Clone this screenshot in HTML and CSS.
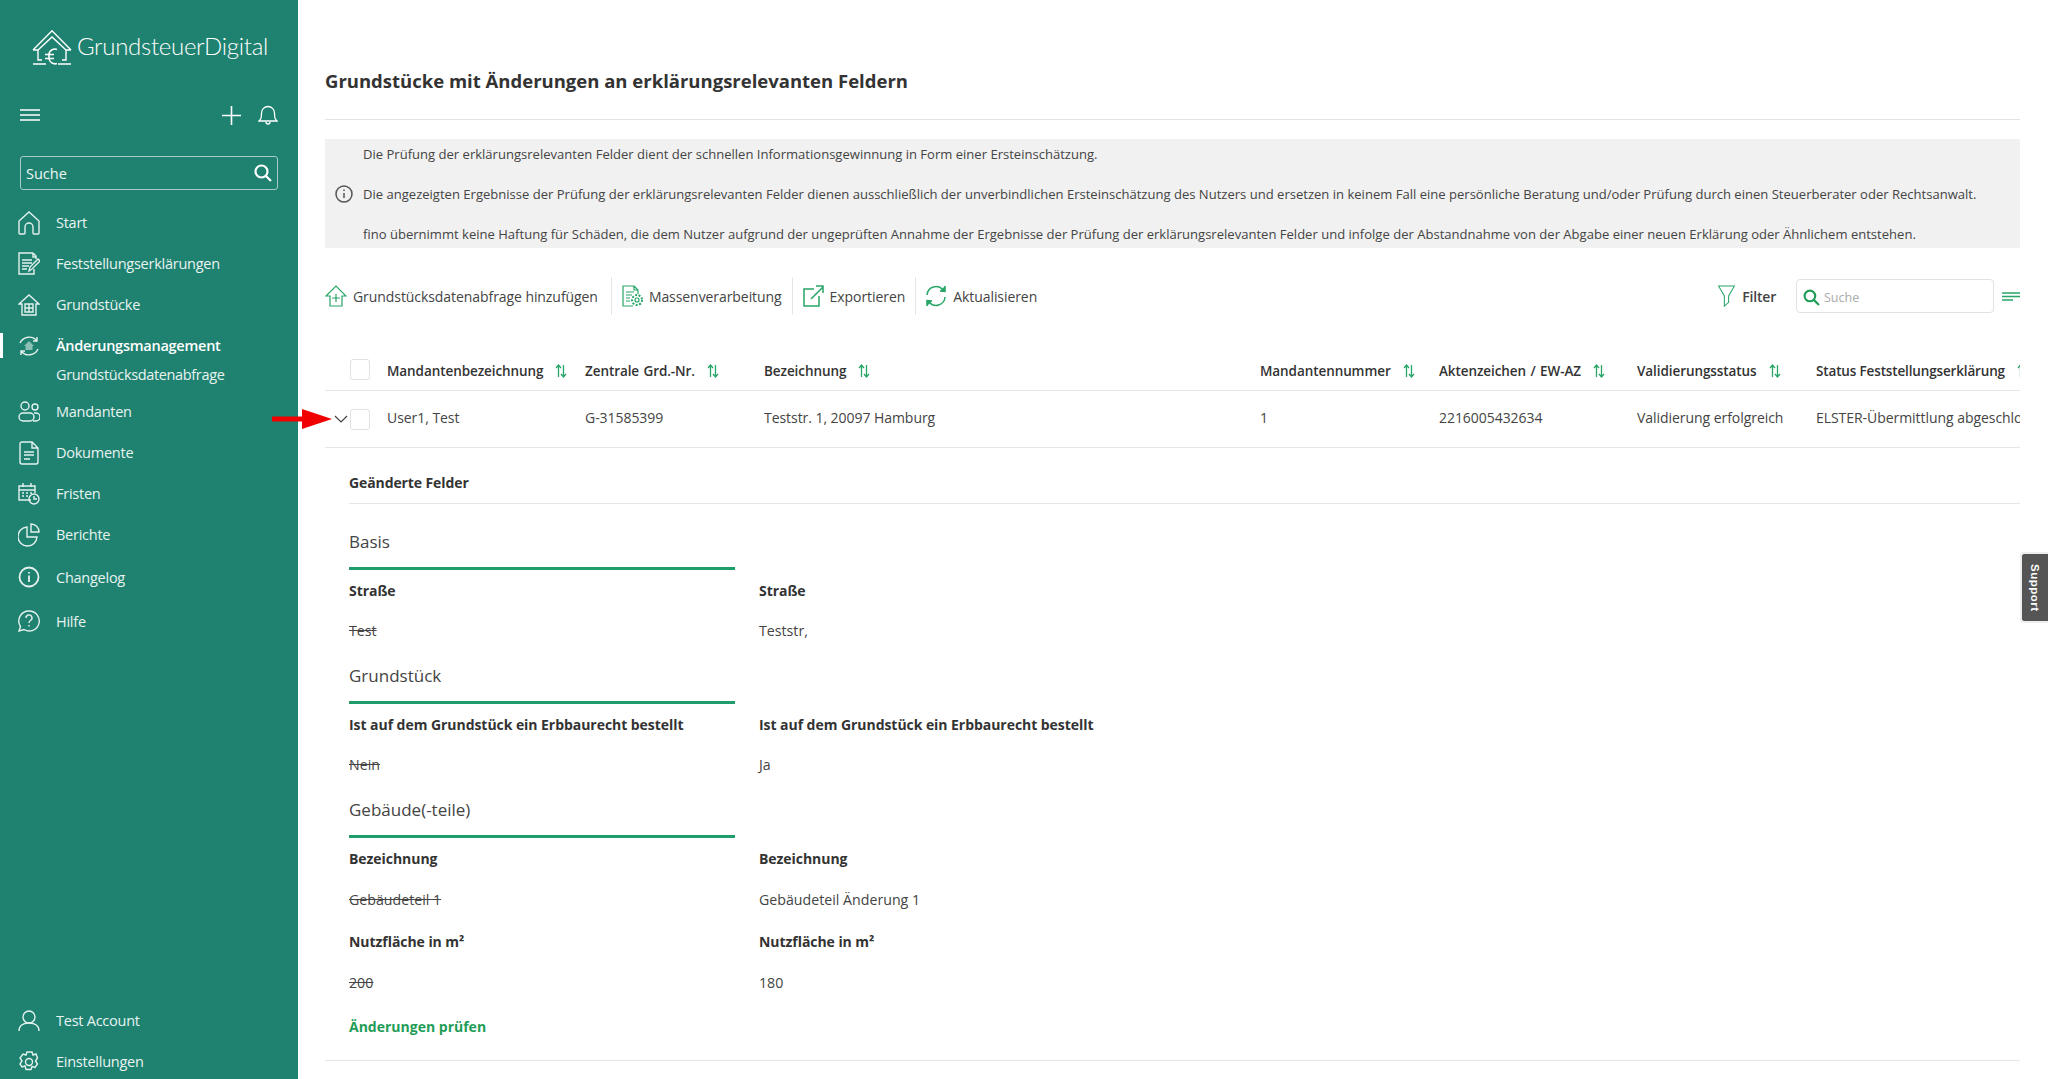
FILE: index.html
```html
<!DOCTYPE html>
<html lang="de">
<head>
<meta charset="utf-8">
<title>Grundstücke mit Änderungen</title>
<link rel="stylesheet" href="styles.css">
</head>
<body>
<svg class="sprite" width="0" height="0">
  <symbol id="sort" viewBox="0 0 12 14"><path d="M3.500 13V1.500M1 4l2.500-3L6 4M8.500 1v11.500M6 10l2.500 3 2.500-3" fill="none" stroke="#27a567" stroke-width="1.300"/></symbol>
</svg>
<div class="app">
  <aside class="sidebar">
    <div class="logo">
      <svg class="logo-icon" viewBox="0 0 40 36" fill="none" stroke="#fff" stroke-width="1.400"><path d="M1 20 20 .8 39 20M1 20h5M39 20h-5M6 20 20 7l14 13M6 20v10h4M34 20v10h-4M1 34h13M26 34h13"/><path d="M25 19.500a6 6 0 0 0-8 4v5a6 6 0 0 0 8 5M13 24.500h9M13 28.500h9" stroke-width="1.600"/></svg>
      <span class="logo-text">GrundsteuerDigital</span>
    </div>
    <div class="side-tools">
      <svg class="ic-burger" viewBox="0 0 20 12" stroke="#fff" stroke-width="1.500"><path d="M0 1h20M0 6h20M0 11h20"/></svg>
      <span class="side-tools-right">
        <svg class="ic-plus" viewBox="0 0 19 19" stroke="#fff" stroke-width="1.600"><path d="M9.500 0v19M0 9.500h19"/></svg>
        <svg class="ic-bell" viewBox="0 0 20 20" fill="none" stroke="#fff" stroke-width="1.300"><path d="M1 16c2-2 2.500-3 2.500-8a6.500 6.500 0 0 1 13 0c0 5 .5 6 2.500 8zM8 17a2 2 0 0 0 4 0M10 1v.5"/></svg>
      </span>
    </div>
    <div class="side-search">
      <span>Suche</span>
      <svg class="ic-side-search" viewBox="0 0 18 18" fill="none" stroke="#fff" stroke-width="2.200"><circle cx="7.500" cy="7.500" r="6"/><path d="m12 12 5 5"/></svg>
    </div>
    <nav class="nav">
      <a class="nav-item"><svg class="nav-ic" viewBox="0 0 22 24"><path d="M1 22V10l10-9 10 9v12a1 1 0 0 1-1 1h-4a1 1 0 0 1-1-1v-6a3 3 0 0 0-8 0v6a1 1 0 0 1-1 1H2a1 1 0 0 1-1-1z"/></svg>Start</a>
      <a class="nav-item"><svg class="nav-ic" viewBox="0 0 22 24"><path d="M15 1H1v21h15v-5M15 1l3 3v3M15 1v4h3M4 8h10M4 11h10M4 14h7M4 17h5M11 19l1-4 8-8 2 2-8 8z"/></svg>Feststellungserklärungen</a>
      <a class="nav-item"><svg class="nav-ic" viewBox="0 0 22 24"><path d="M1 11 11 2l10 9h-3v11H4V11zM7 11h8v8H7zM11 11v8M7 15h8"/></svg>Grundstücke</a>
      <a class="nav-item nav-active"><svg class="nav-ic" viewBox="0 0 22 24"><path d="M2 9a10 10 0 0 1 17-2M20 15a10 10 0 0 1-17 2M19 3v4h-4M3 21v-4h4"/><path class="nav-fill" d="m11 7 5 5h-1.500v4h-7v-4H6z"/></svg>Änderungsmanagement</a>
      <a class="nav-sub">Grundstücksdatenabfrage</a>
      <a class="nav-item nav-after-sub"><svg class="nav-ic" viewBox="0 0 22 24"><circle cx="7" cy="6" r="4"/><circle cx="17" cy="7" r="3"/><rect x="1" y="13" width="15" height="8" rx="4"/><path d="M16 13h2a3.500 3.500 0 0 1 0 8h-3"/></svg>Mandanten</a>
      <a class="nav-item"><svg class="nav-ic" viewBox="0 0 22 24"><path d="M2 3a2 2 0 0 1 2-2h10l6 6v14a2 2 0 0 1-2 2H4a2 2 0 0 1-2-2zM14 1v6h6M6 11h10M6 14h10M6 18h6"/></svg>Dokumente</a>
      <a class="nav-item"><svg class="nav-ic" viewBox="0 0 22 24"><path d="M13 18H1V4h16v7M1 8h16M5 1v4M13 1v4M4 11h2M8 11h2M12 11h2M4 14h2M8 14h2"/><circle cx="16" cy="17" r="5"/><path d="M16 14v3h3"/></svg>Fristen</a>
      <a class="nav-item"><svg class="nav-ic" viewBox="0 0 22 24"><path d="M9 4a9.500 9.500 0 1 0 10 10H9z"/><path d="M13 1a8 8 0 0 1 8 8h-8z"/></svg>Berichte</a>
      <a class="nav-item nav-wide"><svg class="nav-ic nav-ic-strong" viewBox="0 0 22 24"><circle cx="11" cy="12" r="9.500"/><path d="M11 10.500V17M11 7v1.500"/></svg>Changelog</a>
      <a class="nav-item nav-wide"><svg class="nav-ic" viewBox="0 0 22 24"><path d="M11 2a10 10 0 1 1-5 18.500L1 22l1.500-4.500A10 10 0 0 1 11 2z"/><path d="M8 9a3 3 0 1 1 4.500 2.500c-1 .6-1.500 1-1.500 2.500M11 16v1.500"/></svg>Hilfe</a>
    </nav>
    <div class="nav nav-bottom">
      <a class="nav-item"><svg class="nav-ic" viewBox="0 0 22 24"><circle cx="11" cy="8" r="6"/><path d="M1 22c0-5 4-8 10-8s10 3 10 8"/></svg>Test Account</a>
      <a class="nav-item"><svg class="nav-ic" viewBox="0 0 22 24"><circle cx="11" cy="12" r="3.500"/><path d="m9 2-1 3-3-1-3 4 2 3-2 3 2 3 3-1 1 3.500h5l1-3 3 1 2.500-3.500-2-3 2-3L18 4l-3 1-1-3z"/></svg>Einstellungen</a>
    </div>
  </aside>

  <main class="main">
    <h1 class="title">Grundstücke mit Änderungen an erklärungsrelevanten Feldern</h1>
    <section class="notice">
      <svg class="notice-ic" viewBox="0 0 18 18" fill="none" stroke="#555" stroke-width="1.500"><circle cx="9" cy="9" r="8"/><path d="M9 8v5M9 4.500V6"/></svg>
      <div class="notice-text">
        <p>Die Prüfung der erklärungsrelevanten Felder dient der schnellen Informationsgewinnung in Form einer Ersteinschätzung.</p>
        <p>Die angezeigten Ergebnisse der Prüfung der erklärungsrelevanten Felder dienen ausschließlich der unverbindlichen Ersteinschätzung des Nutzers und ersetzen in keinem Fall eine persönliche Beratung und/oder Prüfung durch einen Steuerberater oder Rechtsanwalt.</p>
        <p>fino übernimmt keine Haftung für Schäden, die dem Nutzer aufgrund der ungeprüften Annahme der Ergebnisse der Prüfung der erklärungsrelevanten Felder und infolge der Abstandnahme von der Abgabe einer neuen Erklärung oder Ähnlichem entstehen.</p>
      </div>
    </section>

    <div class="toolbar">
      <div class="tool tool-first"><svg class="tool-ic" viewBox="0 0 22 22" fill="none" stroke="#27a567" stroke-width="1.200"><path d="M1 11 11 1l10 10h-4v10H5V11zM11 9v8M7 13h8"/></svg>Grundstücksdatenabfrage hinzufügen</div>
      <div class="tool"><svg class="tool-ic" viewBox="0 0 22 22" fill="none" stroke="#27a567" stroke-width="1.200"><path d="M13 1H2v20h10M13 1l4 4v4M13 1v4h4M5 7h8M5 10h6M5 13h4M5 16h4"/><circle cx="16" cy="15" r="2"/><circle cx="16" cy="15" r="5" stroke-dasharray="2 1.500" stroke-width="2"/></svg>Massenverarbeitung</div>
      <div class="tool"><svg class="tool-ic" viewBox="0 0 22 22" fill="none" stroke="#27a567" stroke-width="1.500"><path d="M12 4H2v17h15V11M9 14 21 2M14 1h7v7"/></svg>Exportieren</div>
      <div class="tool"><svg class="tool-ic" viewBox="0 0 22 22" fill="none" stroke="#27a567" stroke-width="1.500"><path d="M2 10a9 9 0 0 1 16-5M20 12a9 9 0 0 1-16 5"/><path d="m15 6 5 .5L20 1M2 21v-5.500l5 .5" fill="#27a567"/></svg>Aktualisieren</div>
      <div class="toolbar-right">
        <span class="filter"><svg class="filter-ic" viewBox="0 0 16 20" fill="none" stroke="#27a567" stroke-width="1"><path d="M.5.500h15L10 10v6l-4 3.500V10z"/></svg>Filter</span>
        <span class="table-search"><svg class="ts-ic" viewBox="0 0 16 16" fill="none" stroke="#1f9d57" stroke-width="2"><circle cx="6.500" cy="6.500" r="5"/><path d="m10 10 5 5"/></svg>Suche</span>
        <svg class="ic-lines" viewBox="0 0 18 9" stroke="#27a567" stroke-width="1.600"><path d="M0 1h18M0 4.500h18M0 8h11"/></svg>
      </div>
    </div>

    <div class="table">
      <div class="tr th">
        <span></span>
        <span class="check check-head"></span>
        <span class="cell">Mandantenbezeichnung<svg class="sort"><use href="#sort"/></svg></span>
        <span class="cell">Zentrale Grd.-Nr.<svg class="sort"><use href="#sort"/></svg></span>
        <span class="cell">Bezeichnung<svg class="sort"><use href="#sort"/></svg></span>
        <span class="cell">Mandantennummer<svg class="sort"><use href="#sort"/></svg></span>
        <span class="cell">Aktenzeichen / EW-AZ<svg class="sort"><use href="#sort"/></svg></span>
        <span class="cell">Validierungsstatus<svg class="sort"><use href="#sort"/></svg></span>
        <span class="cell cell-tight">Status Feststellungserklärung<svg class="sort"><use href="#sort"/></svg></span>
      </div>
      <div class="tr td">
        <svg class="chev" viewBox="0 0 14 8" fill="none" stroke="#444" stroke-width="1.200"><path d="m1 1 6 6 6-6"/></svg>
        <span class="check"></span>
        <span class="cell">User1, Test</span>
        <span class="cell">G-31585399</span>
        <span class="cell">Teststr. 1, 20097 Hamburg</span>
        <span class="cell">1</span>
        <span class="cell">2216005432634</span>
        <span class="cell">Validierung erfolgreich</span>
        <span class="cell">ELSTER-Übermittlung abgeschlossen</span>
      </div>
      <svg class="red-arrow" viewBox="0 0 60 20"><path d="M0 7.500h30V0l30 10-30 10v-7.500H0z" fill="#f00000"/></svg>
    </div>

    <section class="detail">
      <h2 class="detail-title">Geänderte Felder</h2>
      <div class="group">
        <h3 class="group-title">Basis</h3>
        <div class="pair"><b>Straße</b><b>Straße</b><s>Test</s><span>Teststr,</span></div>
      </div>
      <div class="group">
        <h3 class="group-title">Grundstück</h3>
        <div class="pair"><b>Ist auf dem Grundstück ein Erbbaurecht bestellt</b><b>Ist auf dem Grundstück ein Erbbaurecht bestellt</b><s>Nein</s><span>Ja</span></div>
      </div>
      <div class="group">
        <h3 class="group-title">Gebäude(-teile)</h3>
        <div class="pair pair-four"><b>Bezeichnung</b><b>Bezeichnung</b><s>Gebäudeteil 1</s><span>Gebäudeteil Änderung 1</span><b>Nutzfläche in m²</b><b>Nutzfläche in m²</b><s>200</s><span>180</span></div>
      </div>
      <div class="check-link">Änderungen prüfen</div>
    </section>
  </main>
</div>
<div class="support"><span>Support</span></div>
</body>
</html>
```
FILE: styles.css
```css
* { box-sizing: border-box; }
html, body { margin: 0; height: 100%; overflow: hidden; }
body { font-family: "Open Sans", "Noto Sans", sans-serif; font-size: 14px; color: #333; background: #fff; }
.sprite { position: absolute; }
.app { display: flex; height: 1079px; }

.sidebar { width: 298px; flex: none; background: #1f8270; color: #e8f3f0; display: flex; flex-direction: column; padding-top: 30px; }
.logo { display: flex; align-items: center; height: 36px; padding-left: 32px; gap: 5px; }
.logo-icon { width: 40px; height: 36px; flex: none; }
.logo-text { font-family: "Lato", sans-serif; font-size: 24px; font-weight: 300; line-height: 32px; letter-spacing: -.3px; color: #fff; white-space: nowrap; margin-top: -4px; }
.side-tools { display: flex; justify-content: space-between; align-items: center; margin-top: 39px; padding: 0 20px; height: 20px; }
.side-tools-right { display: flex; align-items: center; gap: 17px; }
.ic-burger { width: 20px; height: 12px; }
.ic-plus { width: 19px; height: 19px; }
.ic-bell { width: 20px; height: 20px; }
.side-search { display: flex; justify-content: space-between; align-items: center; margin: 31px 20px 0; height: 34px; border: 1px solid #a5cdc5; border-radius: 3px; padding: 0 5px; font-size: 14.500px; color: #eef7f5; }
.ic-side-search { width: 18px; height: 18px; }

.nav { display: flex; flex-direction: column; padding-top: 12px; }
.nav-item { position: relative; display: flex; align-items: center; height: 41px; padding-left: 18px; font-size: 14.500px; letter-spacing: -.25px; }
.nav-ic { width: 22px; height: 24px; margin-right: 16px; flex: none; fill: none; stroke: #e4f1ee; stroke-width: 1.400; }
.nav-ic-strong { stroke-width: 1.800; }
.nav-fill { fill: #8cc0b5; stroke: none; }
.nav-active { font-weight: 600; color: #fff; }
.nav-active::before { content: ""; position: absolute; left: 0; top: 8px; width: 3px; height: 25px; background: #fff; }
.nav-sub { padding-left: 56px; height: 18px; line-height: 18px; font-size: 14.500px; letter-spacing: -.35px; }
.nav-after-sub { margin-top: 7px; }
.nav-wide { height: 44px; }
.nav-bottom { margin-top: auto; padding: 0; margin-bottom: -3px; }

.main { flex: 1; min-width: 0; padding: 0 28px 0 27px; }
.title { margin: 0; height: 120px; padding-top: 68px; font-size: 18.500px; line-height: 26px; font-weight: 700; border-bottom: 1px solid #e4e4e4; color: #333; }
.notice { display: flex; align-items: center; margin-top: 19px; height: 109px; background: #f1f1f1; padding-left: 10px; }
.notice-ic { width: 18px; height: 18px; flex: none; margin-right: 10px; }
.notice-text { display: flex; flex-direction: column; justify-content: space-between; height: 100%; padding: 5px 0 4px; }
.notice-text p { margin: 0; font-size: 13.050px; line-height: 20px; white-space: nowrap; color: #444; }

.toolbar { display: flex; align-items: center; margin-top: 29px; height: 38px; }
.tool { display: flex; align-items: center; height: 38px; padding: 0 10px 0 9px; border-left: 1px solid #e6e6e6; font-size: 14px; letter-spacing: -.07px; color: #444; white-space: nowrap; gap: 6px; }
.tool-first { border-left: 0; padding: 0 13px 0 0; }
.tool-ic { width: 22px; height: 22px; flex: none; }
.toolbar-right { display: flex; align-items: center; margin-left: auto; }
.filter { display: flex; align-items: center; gap: 7px; font-size: 14px; font-weight: 600; color: #444; letter-spacing: -.2px; margin-right: 20px; }
.filter-ic { width: 17px; height: 22px; }
.table-search { display: flex; align-items: center; gap: 4px; width: 198px; height: 34px; border: 1px solid #e2e2e2; border-radius: 4px; padding: 2px 0 0 6px; font-size: 12.500px; color: #aaa; }
.ts-ic { width: 17px; height: 17px; }
.ic-lines { width: 18px; height: 9px; margin-left: 8px; }

.table { position: relative; margin-top: 37px; }
.tr { display: grid; grid-template-columns: 25px 37px 198px 179px 496px 179px 198px 179px 204px; align-items: center; overflow: hidden; border-bottom: 1px solid #e6e6e6; }
.th { height: 39px; font-weight: 600; font-size: 13.500px; letter-spacing: -.08px; word-spacing: 1px; color: #333; }
.td { height: 57px; font-size: 14px; letter-spacing: -.05px; color: #444; }
.td .cell { padding-bottom: 3px; }
.cell { white-space: nowrap; overflow: hidden; display: flex; align-items: center; }
.cell-tight { letter-spacing: -.15px; word-spacing: 0; }
.check { width: 20px; height: 21px; border: 1px solid #e2e2e2; border-radius: 3px; background: #fff; }
.check-head { margin-top: -4px; }
.sort { width: 12px; height: 14px; margin-left: 12px; flex: none; }
.chev { width: 14px; height: 8px; margin-left: 9px; }
.red-arrow { position: absolute; left: -53px; top: 57px; width: 60px; height: 20px; }

.detail { padding-left: 24px; }
.detail-title { margin: 0; height: 56px; padding-top: 25px; font-size: 14px; line-height: 20px; font-weight: 700; letter-spacing: -.1px; border-bottom: 1px solid #e6e6e6; color: #333; }
.group { margin-top: 12px; }
.group + .group { margin-top: 0; }
.group-title { margin: 0; width: 386px; height: 54px; line-height: 51px; font-size: 17px; font-weight: 400; border-bottom: 3px solid #1f9d6a; color: #444; }
.pair { display: grid; grid-template-columns: 410px 1fr; grid-auto-rows: 40px; align-items: center; font-size: 14.200px; color: #444; }
.pair-four { grid-template-rows: 41px 41px 42px 40px; }
.pair b { font-weight: 700; font-size: 14px; letter-spacing: -.05px; color: #333; }
.check-link { margin-top: 15px; font-size: 14px; font-weight: 700; color: #1f9d57; line-height: 20px; height: 43px; }
.detail::after { content: ""; display: block; margin-left: -24px; border-bottom: 1px solid #e6e6e6; }

.support { position: absolute; right: 0; top: 552px; width: 28px; height: 71px; background: #555; border: 2px solid #eee; border-right: 0; border-radius: 4px 0 0 4px; display: flex; align-items: center; justify-content: center; }
.support span { writing-mode: vertical-rl; font-family: "Liberation Sans", sans-serif; font-size: 11.500px; font-weight: 700; color: #fff; letter-spacing: .5px; }
```
